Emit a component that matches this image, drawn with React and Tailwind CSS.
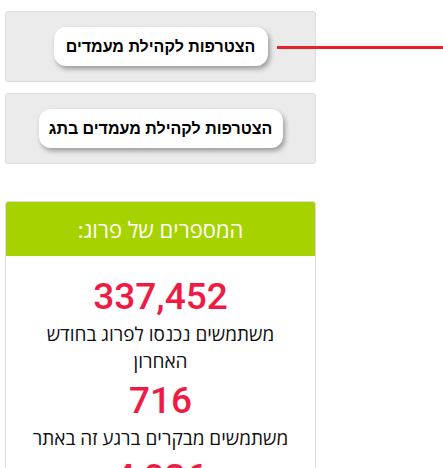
import React from 'react';

const stats = [
  { value: '337,452', label: 'משתמשים נכנסו לפרוג בחודש האחרון' },
  { value: '716', label: 'משתמשים מבקרים ברגע זה באתר' },
  { value: '4,026', label: 'הודעות נכתבו היום' },
];

const JoinBox = ({ text, width }) => (
  <div className="w-[311px] h-[71px] bg-[#ebebeb] border border-[#dcdcdc] rounded-[3px] flex items-center justify-center">
    <button
      dir="rtl"
      className={`h-[39px] ${width} bg-white rounded-[12px] shadow-[2px_3px_5px_rgba(0,0,0,0.35)] text-[16px] font-bold text-black`}
    >
      {text}
    </button>
  </div>
);

const App = () => {
  return (
    <div className="w-[443px] h-[468px] overflow-hidden bg-white font-['Liberation_Sans',sans-serif]">
      <div className="flex flex-col gap-[11px] pt-[11px] pl-[5px]">
        <div className="relative w-[311px]">
          <JoinBox text="הצטרפות לקהילת מעמדים" width="w-[214px]" />
          <div className="absolute left-[272px] top-[35px] w-[171px] h-[3px] bg-[#e8222a]"></div>
        </div>
        <JoinBox text="הצטרפות לקהילת מעמדים בתג" width="w-[244px]" />
      </div>

      <div className="ml-[5px] mt-[37px] w-[311px] border border-[#dcdcdc] rounded-[3px] overflow-hidden">
        <div dir="rtl" className="h-[54px] bg-[#a6d300] flex items-center justify-center text-white text-[22px] font-['Open_Sans','Liberation_Sans',sans-serif]">
          המספרים של פרוג:
        </div>
        <div className="bg-white pt-[17px] px-[20px] flex flex-col items-center text-center">
          {stats.map(s => (
            <div key={s.value} className="flex flex-col items-center">
              <div className="text-[#ee1c44] text-[37px] font-medium leading-[48px] font-['Roboto',sans-serif]">
                {s.value}
              </div>
              <div dir="rtl" className="text-[#111] text-[19px] leading-[27px] mt-[0px] mb-[2px] font-['Open_Sans','Liberation_Sans',sans-serif]">
                {s.label}
              </div>
            </div>
          ))}
        </div>
      </div>
    </div>
  );
};

export default App;
